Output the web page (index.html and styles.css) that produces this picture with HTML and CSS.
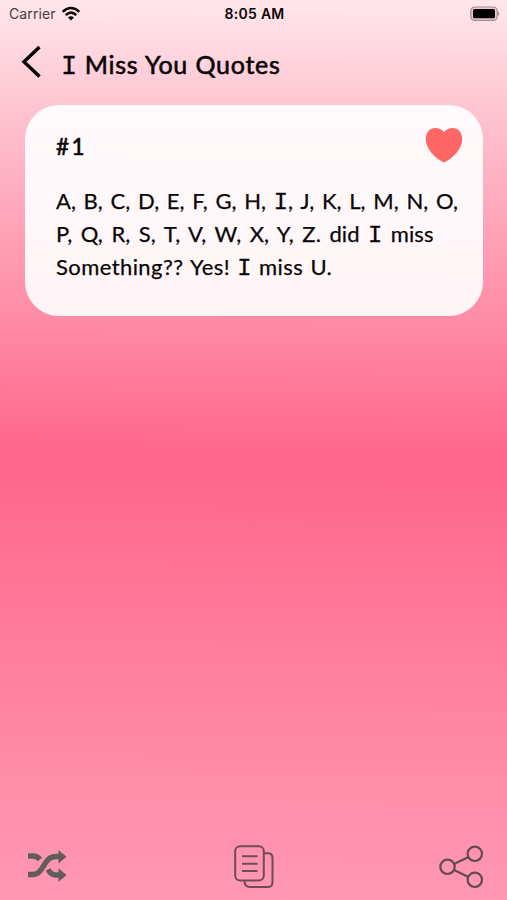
FILE: index.html
```html
<!DOCTYPE html>
<html lang="en">
<head>
<meta charset="utf-8">
<title>I Miss You Quotes</title>
<link rel="stylesheet" href="styles.css">
</head>
<body>
<div class="screen">
  <div class="status">
    <div class="carrier"><span>Carrier</span>
      <svg width="20" height="16" viewBox="0 0 20 16" fill="none" stroke="#080607" stroke-width="2.5"><path d="M1.7 5.8Q10-1.8 18.3 5.8M4.7 9.1Q10 4.1 15.3 9.1"/><path d="M7 11.5Q10 8.8 13 11.5L10 14.6Z" fill="#080607" stroke="none"/></svg>
    </div>
    <div class="time">8:05 AM</div>
    <svg class="battery" width="30" height="16" viewBox="0 0 30 16"><rect x=".8" y="1" width="26.4" height="13.4" rx="4" fill="#edc8cf" stroke="#a48b90" stroke-width="1.2"/><rect x="3" y="3.1" width="22" height="9.2" rx="1.5" fill="#000"/><path d="M28 5.5Q30.5 7.7 28 10Z" fill="#a48b90"/></svg>
  </div>
  <header class="header">
    <svg width="22" height="34" viewBox="0 0 22 34" fill="none" stroke="#000" stroke-width="3.4"><path d="M18.5 2L3 16.8L18.5 31.5"/></svg>
    <h1><span class="slab">I</span> Miss You Quotes</h1>
  </header>
  <main class="card">
    <div class="card-head">
      <h2>#1</h2>
      <svg width="38" height="36" viewBox="0 0 38 36"><path fill="#ff6767" d="M19 35.5C9 31 .8 21 .8 12.2C.8 5.5 4.8 1 10.3 1C14 1 17.4 2.7 19 5.5C20.6 2.7 24 1 27.7 1C33.2 1 37.2 5.5 37.2 12.2C37.2 21 29 31 19 35.5Z"/></svg>
    </div>
    <p class="quote">
      <span class="line one">A, B, C, D, E, F, G, H, <span class="slab">I</span>, J, K, L, M, N, O,</span>
      <span class="line two">P, Q, R, S, T, V, W, X, Y, Z. did <span class="slab">I</span> miss</span>
      <span class="line three">Something?? Yes! <span class="slab">I</span> miss U.</span>
    </p>
  </main>
  <footer class="actions">
    <svg width="40" height="34" viewBox="0 0 40 34" fill="none" stroke="#625d5b" stroke-width="5.5"><path d="M0 6H5Q9 6 12 9.5M0 24.5H5C16 24.5 15 6.5 28 6.5H32M20 19.5Q23 25 28 25H32"/><path fill="#625d5b" stroke="none" d="M30.5 0L38.5 6.7L30.5 13.5ZM30.5 18.3L38.5 25L30.5 32Z"/></svg>
    <svg width="40" height="44" viewBox="0 0 40 44" fill="none" stroke="#704b56" stroke-width="2"><rect x="1.2" y="1.2" width="28.6" height="34.3" rx="5"/><path d="M30 8.2H34Q38.5 8.2 38.5 13V37Q38.5 42 33.5 42H16Q10.5 42 10.5 36M8 11.3H23.5M8 18.8H23.5M8 26H23.5"/></svg>
    <svg class="share" width="44" height="44" viewBox="0 0 44 44" fill="none" stroke="#624c52" stroke-width="2.2"><path d="M14 19L28.5 12M14 25L28.5 32"/><circle cx="7.5" cy="21.8" r="7.2"/><circle cx="34.8" cy="8.8" r="7.2"/><circle cx="34.8" cy="34.8" r="7.2"/></svg>
  </footer>
</div>
</body>
</html>
```

FILE: styles.css
```css
* { box-sizing: border-box; margin: 0; padding: 0; }
body { font-family: Lato, "Open Sans", sans-serif; color: #080607; }
svg { display: block; flex: none; }
.screen {
  width: 507px; height: 900px; display: flex; flex-direction: column; overflow: hidden;
  background: linear-gradient(180.4deg, #ffe7eb 0%, #ffd9e1 5%, #ffc5d2 12%, #ffa6bb 24%, #ff8aa6 36%, #ff668b 50.5%, #ff688d 54%, #ff7b9b 70%, #ff8ba8 85%, #ff98b4 100%);
}
.status {
  height: 28px; padding: 0 7px 0 9px; display: grid; grid-template-columns: 1fr auto 1fr; align-items: center;
  font: 14px/28px Inter, sans-serif;
}
.carrier { display: flex; align-items: center; gap: 5px; color: #463d40; letter-spacing: .1px; }
.time { font-weight: 600; font-size: 14px; letter-spacing: .3px; }
.battery { justify-self: end; }
.share { overflow: visible; }
.header { height: 76px; padding: 17px 0 0 21px; display: flex; align-items: flex-start; gap: 18px; }
h1 { font-size: 25px; line-height: 39px; font-weight: 400; -webkit-text-stroke: .6px; white-space: nowrap; word-spacing: .5px; letter-spacing: .7px; }
.slab { font-family: "Liberation Mono", monospace; font-size: 1.08em; line-height: 0; letter-spacing: 0; -webkit-text-stroke: .3px; }
.card { width: 457.5px; height: 211.5px; margin: .5px 0 0 25px; padding: 22px 20px 0 31px; border-radius: 34px; background: rgba(255,255,255,.91); }
.card-head { height: 57px; display: flex; justify-content: space-between; }
h2 { font-size: 22.5px; line-height: 39px; font-weight: 400; letter-spacing: 2.5px; -webkit-text-stroke: .6px; }
.quote { font-size: 22px; line-height: 33.2px; -webkit-text-stroke: .25px; }
.line { display: block; white-space: nowrap; }
.one { word-spacing: 2.1px; }
.two { word-spacing: 2.7px; letter-spacing: .1px; }
.three { word-spacing: 1.3px; letter-spacing: .42px; }
.actions { margin-top: auto; height: 67px; padding: 0 23px 0 28px; display: flex; justify-content: space-between; align-items: center; }
```
